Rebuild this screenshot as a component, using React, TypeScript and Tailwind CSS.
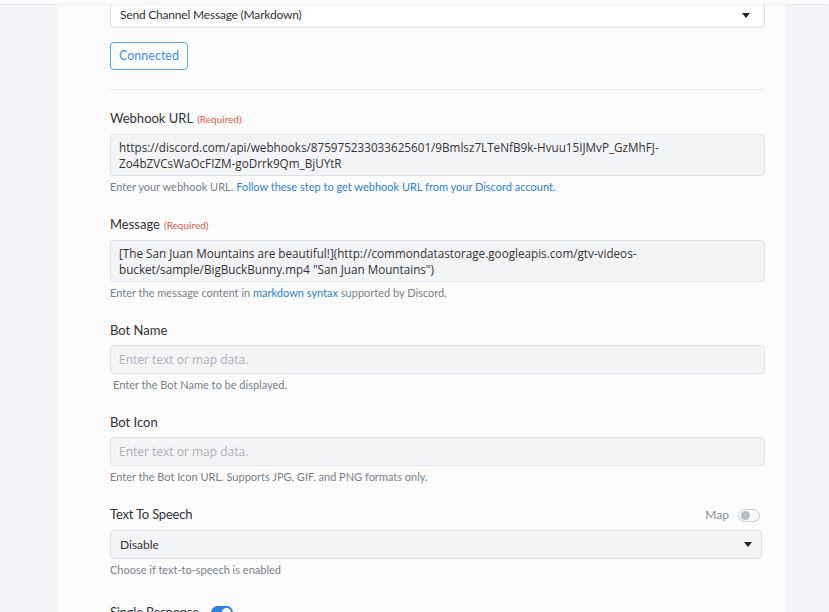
import React from 'react'

const Caret = () => (
  <svg width="8" height="5" viewBox="0 0 8 5" className="shrink-0">
    <path d="M0 0h8L4 5z" fill="#222" />
  </svg>
)

const Label = ({ text, required }: { text: string; required?: boolean }) => (
  <div className="h-4 text-[13px] leading-4 text-[#333]">
    {text}
    {required && <span className="ml-1 text-[10px] text-[#e0584c]">(Required)</span>}
  </div>
)

const Help = ({ children, indent }: { children: React.ReactNode; indent?: boolean }) => (
  <div className={`mt-1 h-[14px] text-[11px] leading-[14px] text-[#7a7f85] ${indent ? 'pl-[3px]' : ''}`}>
    {children}
  </div>
)

const Area = ({ lines }: { lines: string[] }) => (
  <div className="mt-2 h-[42px] rounded border border-[#dde0e4] bg-[#f3f4f6] px-2 py-[4px] text-[11.7px] leading-4 text-[#333] font-['Open_Sans',sans-serif]">
    {lines.map((l) => (
      <div key={l} className="whitespace-nowrap">{l}</div>
    ))}
  </div>
)

const TextInput = () => (
  <div className="mt-[7px] flex h-[29px] items-center rounded border border-[#dde0e4] bg-[#f3f4f6] px-2 text-[12px] text-[#aab0b6] font-['Open_Sans',sans-serif]">
    Enter text or map data.
  </div>
)

export default function App() {
  return (
    <div className="relative h-[612px] w-[829px] overflow-hidden bg-[#f2f4f7] font-['Lato',sans-serif]">
      <div className="relative z-10 h-1 w-full bg-[#fbfbfc] shadow-[0_1px_1px_rgba(0,0,0,0.04)]" />
      <div className="ml-[57px] h-full w-[728px] bg-[#fcfcfd] pl-[53px] pr-5">
        <div className="-mt-[2px] flex h-[26px] items-center justify-between rounded border border-[#dcdfe3] bg-white pl-[9px] pr-[14px] text-[12px] text-[#333]">
          <span className="tracking-[-0.2px]">Send Channel Message (Markdown)</span>
          <Caret />
        </div>
        <button
          type="button"
          className="mt-[14px] flex h-7 w-[78px] items-center justify-center rounded border border-[#5aa7f0] bg-white text-[12.5px] text-[#3a8fe6]"
        >
          Connected
        </button>
        <div className="mt-[19px] h-px bg-[#eceef1]" />

        <div className="mt-5">
          <Label text="Webhook URL" required />
          <Area
            lines={[
              'https://discord.com/api/webhooks/875975233033625601/9Bmlsz7LTeNfB9k-Hvuu15IJMvP_GzMhFJ-',
              'Zo4bZVCsWaOcFIZM-goDrrk9Qm_BjUYtR',
            ]}
          />
          <Help>
            Enter your webhook URL.{' '}
            <span className="text-[#2f80d4]">Follow these step to get webhook URL from your Discord account.</span>
          </Help>
        </div>

        <div className="mt-[22px]">
          <Label text="Message" required />
          <Area
            lines={[
              '[The San Juan Mountains are beautiful!](http://commondatastorage.googleapis.com/gtv-videos-',
              'bucket/sample/BigBuckBunny.mp4 "San Juan Mountains")',
            ]}
          />
          <Help>
            Enter the message content in <span className="text-[#2f80d4]">markdown syntax</span> supported by Discord.
          </Help>
        </div>

        <div className="mt-[22px]">
          <Label text="Bot Name" />
          <TextInput />
          <Help indent>Enter the Bot Name to be displayed.</Help>
        </div>

        <div className="mt-[22px]">
          <Label text="Bot Icon" />
          <TextInput />
          <Help>Enter the Bot Icon URL. Supports JPG, GIF, and PNG formats only.</Help>
        </div>

        <div className="mt-[23px]">
          <div className="flex h-4 items-center justify-between">
            <span className="text-[13px] text-[#333] tracking-[-0.2px]">Text To Speech</span>
            <div className="flex items-center gap-[9px] pr-[5px]">
              <span className="text-[12px] text-[#8a8f95]">Map</span>
              <span className="flex h-[13px] w-[22px] items-center rounded-full border border-[#c9cdd2] bg-[#f7f8f9] pl-[2px]">
                <span className="h-[9px] w-[9px] rounded-full bg-[#b9bdc2]" />
              </span>
            </div>
          </div>
          <div className="mr-[3px] mt-[7px] flex h-[29px] items-center justify-between rounded border border-[#dde0e4] bg-[#f3f4f6] pl-[9px] pr-[9px] text-[12px] text-[#333]">
            <span>Disable</span>
            <Caret />
          </div>
          <Help>Choose if text-to-speech is enabled</Help>
        </div>

        <div className="mt-[26px] flex items-center gap-[12px]">
          <span className="text-[13px] text-[#333] tracking-[-0.2px]">Single Response</span>
          <span className="flex h-[13px] w-[22px] items-center justify-end rounded-full bg-[#2f80e0] pr-[2px]">
            <span className="h-[9px] w-[9px] rounded-full bg-white" />
          </span>
        </div>
      </div>
    </div>
  )
}
